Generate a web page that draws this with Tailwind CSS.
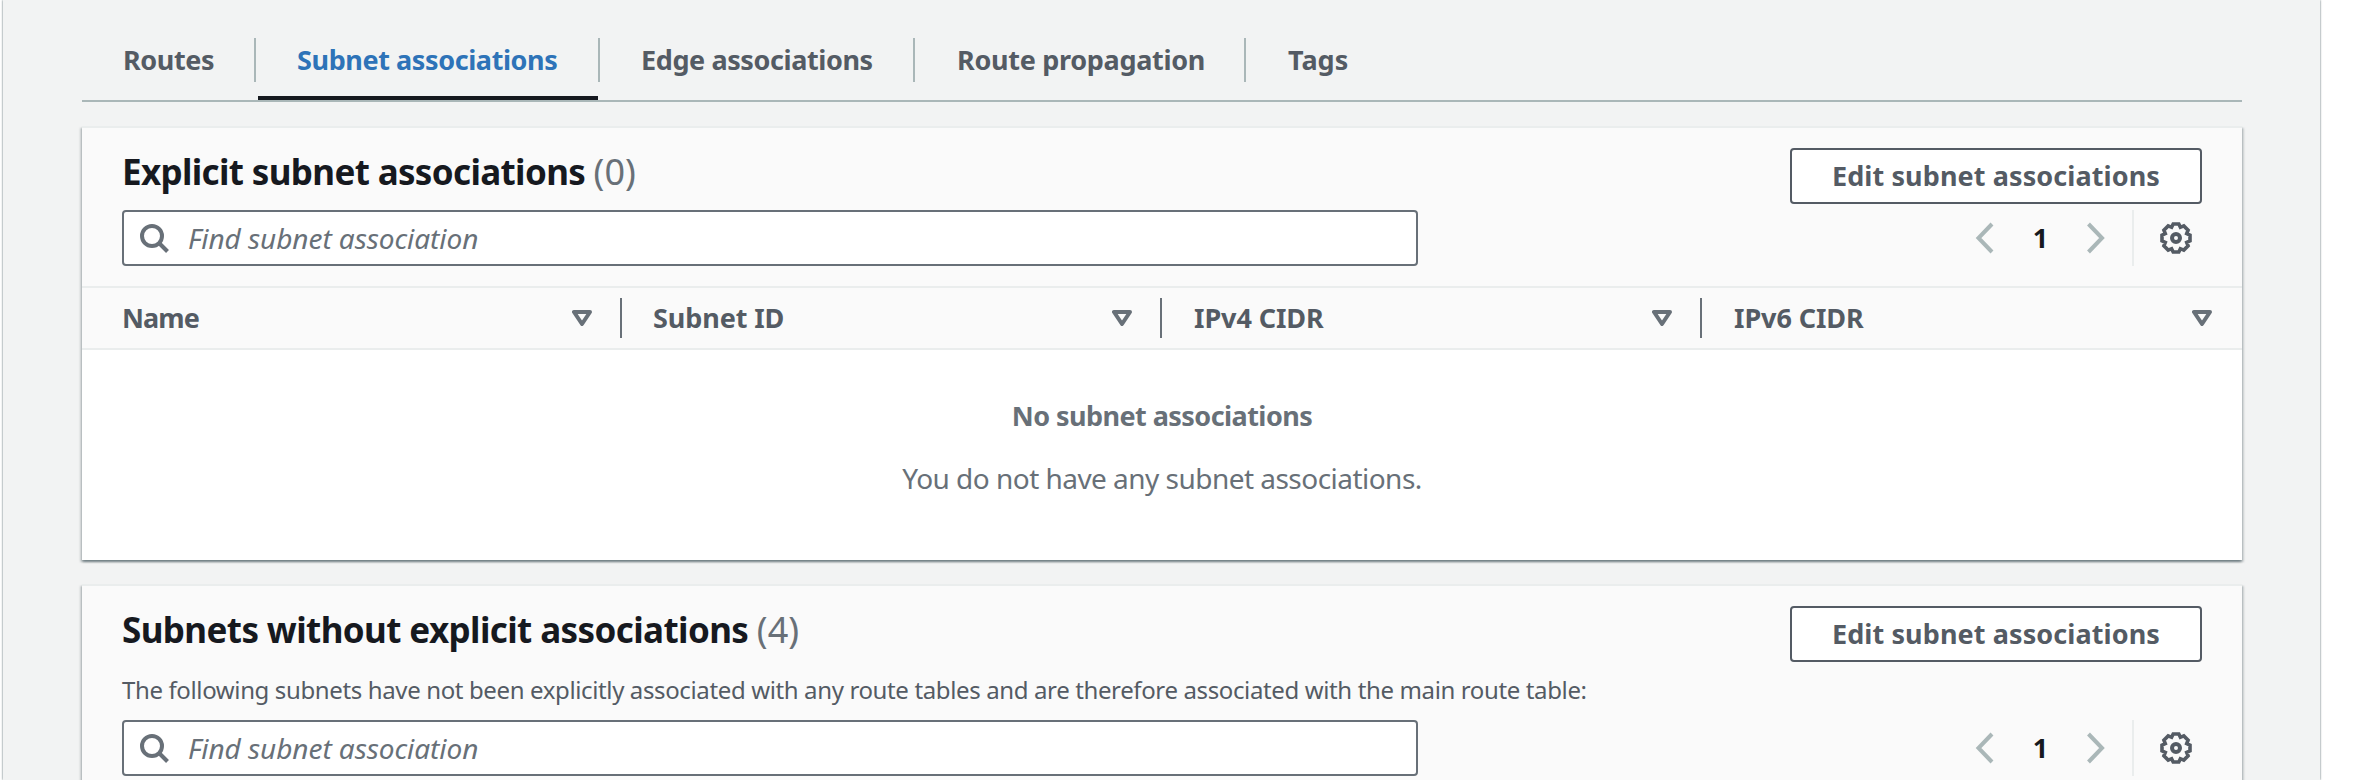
<!DOCTYPE html>
<html lang="en">
<head>
<meta charset="utf-8">
<title>Subnet associations</title>
<script src="https://cdn.jsdelivr.net/npm/@tailwindcss/browser@4"></script>
</head>
<body class="bg-white h-[780px] overflow-hidden font-['Noto_Sans',sans-serif] text-[27px] leading-[44px] text-[#545b64]">
<svg class="hidden">
  <symbol id="search" viewBox="0 0 32 32"><g fill="none" stroke="#687078" stroke-width="4"><circle cx="14" cy="14" r="10"/><path d="M21 21l8.500 8.500"/></g></symbol>
  <symbol id="sort" viewBox="0 0 20 16"><path d="M2 2h16l-8 12z" fill="none" stroke="#687078" stroke-width="4" stroke-linejoin="round"/></symbol>
  <symbol id="prev" viewBox="0 0 20 32"><path d="M17 2L3.500 16 17 30" fill="none" stroke="#aab7b8" stroke-width="4"/></symbol>
  <symbol id="next" viewBox="0 0 20 32"><path d="M2.500 2L16 16 2.500 30" fill="none" stroke="#aab7b8" stroke-width="4"/></symbol>
  <symbol id="gear" viewBox="0 0 32 32"><g fill="none" stroke="#545b64" stroke-width="4"><circle cx="16" cy="16" r="4"/><path stroke-width="3.600" d="M30 13.200V18.800L26.700 20.400 28.100 23.800 23.800 28.100 20.400 26.700 18.800 30H13.200L11.600 26.700 8.200 28.100 3.900 23.800 5.300 20.400 2 18.800V13.200L5.300 11.600 3.900 8.200 8.200 3.900 11.600 5.300 13.200 2H18.800L20.400 5.300 23.800 3.900 28.100 8.200 26.700 11.600z"/></g></symbol>
</svg>
<main class="ml-[3px] w-[2317px] h-[780px] bg-[#f2f3f3] pl-[79px] pr-[78px] flex flex-col shadow-[0_0_2px_0_rgba(0,28,36,0.7)]">
  <nav class="h-[102px] shrink-0 border-b-2 border-[#aab7b8] pt-[38px] flex font-bold tracking-[-0.4px] whitespace-nowrap">
    <a class="w-[174px] h-[44px] pl-[41px] border-r-2 border-[#aab7b8]">Routes</a>
    <a class="ml-[2px] w-[340px] h-[62px] border-b-4 border-[#16191f] text-[#2e73b8] pl-[39px]">Subnet associations</a>
    <a class="w-[317px] h-[44px] pl-[41px] border-x-2 border-[#aab7b8]">Edge associations</a>
    <a class="w-[331px] h-[44px] pl-[42px] border-r-2 border-[#aab7b8] tracking-[-0.3px]">Route propagation</a>
    <a class="h-[44px] pl-[42px] tracking-normal">Tags</a>
  </nav>

  <section class="mt-[24px] h-[434px] shrink-0 bg-white border-t-2 border-[#eaeded] shadow-[0_2px_2px_0_rgba(0,28,36,0.35),2px_2px_2px_0_rgba(0,28,36,0.15),-2px_2px_2px_0_rgba(0,28,36,0.15)]">
    <header class="h-[160px] bg-[#fafafa] border-b-2 border-[#eaeded] px-[40px] pt-[20px] flex flex-col gap-[6px]">
      <div class="h-[56px] flex justify-between whitespace-nowrap">
        <h2 class="text-[35px] leading-[48px] font-bold text-[#16191f] tracking-[-0.65px]">Explicit subnet associations <span class="font-normal text-[36px] leading-[1] text-[#687078] tracking-normal">(0)</span></h2>
        <button class="w-[412px] h-[56px] border-2 border-[#545b64] rounded-[4px] bg-white font-bold leading-[50px] tracking-[0.1px]">Edit subnet associations</button>
      </div>
      <div class="flex justify-between items-center h-[56px]">
        <div class="w-[1296px] h-[56px] bg-white border-2 border-[#687078] rounded-[4px] flex items-center pl-[14px] text-[28px] italic tracking-[-0.06px] text-[#687078]"><svg class="size-[32px] mr-[18px]"><use href="#search"/></svg>Find subnet association</div>
        <div class="flex items-center h-[56px] pr-[10px]">
          <svg class="w-[20px] h-[32px]"><use href="#prev"/></svg>
          <span class="w-[91px] text-center font-bold text-[#16191f]">1</span>
          <svg class="w-[20px] h-[32px]"><use href="#next"/></svg>
          <span class="ml-[26px] mr-[26px] w-[2px] h-[56px] bg-[#eaeded]"></span>
          <svg class="size-[32px]"><use href="#gear"/></svg>
        </div>
      </div>
    </header>
    <div class="h-[62px] bg-[#fafafa] border-b-2 border-[#eaeded] grid grid-cols-4 items-center font-bold">
      <div class="h-[40px] leading-[40px] pl-[40px] pr-[28px] border-r-2 border-[#687078] flex items-center justify-between tracking-[-0.9px]">Name<svg class="w-[20px] h-[16px]"><use href="#sort"/></svg></div>
      <div class="h-[40px] leading-[40px] pl-[31px] pr-[28px] border-r-2 border-[#687078] flex items-center justify-between tracking-[-0.1px]">Subnet ID<svg class="w-[20px] h-[16px]"><use href="#sort"/></svg></div>
      <div class="h-[40px] leading-[40px] pl-[32px] pr-[28px] border-r-2 border-[#687078] flex items-center justify-between tracking-[-0.1px]">IPv4 CIDR<svg class="w-[20px] h-[16px]"><use href="#sort"/></svg></div>
      <div class="h-[40px] leading-[40px] pl-[32px] pr-[30px] flex items-center justify-between tracking-[-0.1px]">IPv6 CIDR<svg class="w-[20px] h-[16px]"><use href="#sort"/></svg></div>
    </div>
    <div class="pt-[44px] flex flex-col items-center gap-[18px] text-[#687078]">
      <p class="font-bold tracking-[-0.55px]">No subnet associations</p>
      <p class="text-[28px] tracking-[-0.53px]">You do not have any subnet associations.</p>
    </div>
  </section>

  <section class="mt-[24px] flex-1 min-h-0 overflow-hidden bg-white border-t-2 border-[#eaeded] shadow-[0_2px_2px_0_rgba(0,28,36,0.35),2px_2px_2px_0_rgba(0,28,36,0.15),-2px_2px_2px_0_rgba(0,28,36,0.15)]">
    <header class="h-full bg-[#fafafa] px-[40px] pt-[20px] flex flex-col gap-[6px]">
      <div class="h-[108px] shrink-0 flex justify-between whitespace-nowrap">
        <div>
          <h2 class="text-[35px] leading-[48px] font-bold text-[#16191f] tracking-[-0.6px]">Subnets without explicit associations <span class="font-normal text-[36px] leading-[1] text-[#687078] tracking-normal">(4)</span></h2>
          <p class="mt-[18px] text-[24px] leading-[36px] tracking-[-0.37px]">The following subnets have not been explicitly associated with any route tables and are therefore associated with the main route table:</p>
        </div>
        <button class="w-[412px] h-[56px] border-2 border-[#545b64] rounded-[4px] bg-white font-bold leading-[50px] tracking-[0.1px]">Edit subnet associations</button>
      </div>
      <div class="flex justify-between items-center h-[56px] shrink-0">
        <div class="w-[1296px] h-[56px] bg-white border-2 border-[#687078] rounded-[4px] flex items-center pl-[14px] text-[28px] italic tracking-[-0.06px] text-[#687078]"><svg class="size-[32px] mr-[18px]"><use href="#search"/></svg>Find subnet association</div>
        <div class="flex items-center h-[56px] pr-[10px]">
          <svg class="w-[20px] h-[32px]"><use href="#prev"/></svg>
          <span class="w-[91px] text-center font-bold text-[#16191f]">1</span>
          <svg class="w-[20px] h-[32px]"><use href="#next"/></svg>
          <span class="ml-[26px] mr-[26px] w-[2px] h-[56px] bg-[#eaeded]"></span>
          <svg class="size-[32px]"><use href="#gear"/></svg>
        </div>
      </div>
    </header>
  </section>
</main>
</body>
</html>
